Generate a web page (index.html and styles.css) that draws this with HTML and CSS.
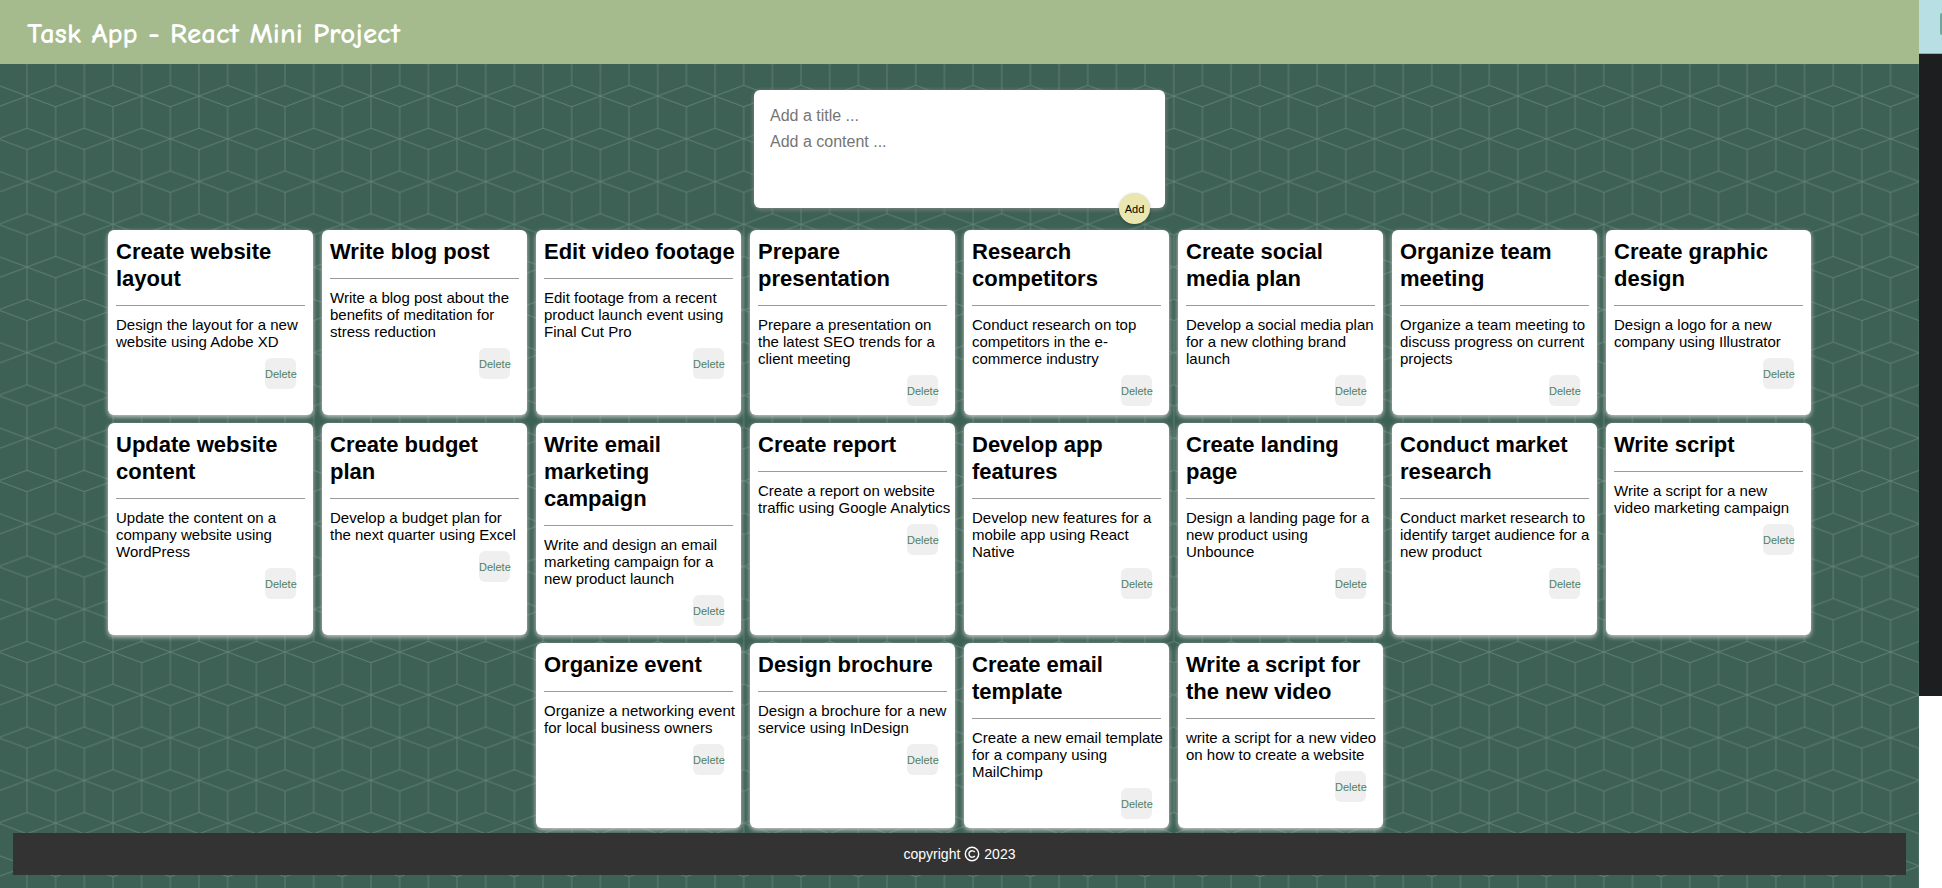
FILE: index.html
```html
<!DOCTYPE html>
<html lang="en">
<head>
<meta charset="utf-8">
<title>Task App</title>
<link rel="stylesheet" href="styles.css">
</head>
<body>
<div class="page">
  <div class="app">
    <svg class="backdrop" aria-hidden="true">
      <defs>
        <pattern id="cubes" x="-1.7" y="53.3" width="57.34" height="85.54" patternUnits="userSpaceOnUse">
          <path d="M0 0L28.67 10.6L57.34 0M0 0V32.1M57.34 0V32.1M0 32.1L28.67 42.77L57.34 32.1M28.67 10.6V42.77M0 53.4L28.67 42.77L57.34 53.4M0 53.4V85.54M57.34 53.4V85.54M28.67 42.77V74.9M0 85.54L28.67 74.9L57.34 85.54"/>
        </pattern>
      </defs>
      <rect width="100%" height="100%" fill="url(#cubes)"/>
    </svg>
    <header class="header"><h1>Task App - React Mini Project</h1></header>
    <main class="main">
      <form class="task-form">
        <input type="text" aria-label="Title" placeholder="Add a title ...">
        <textarea rows="3" aria-label="Content" placeholder="Add a content ..."></textarea>
        <button type="button">Add</button>
      </form>
      <section class="tasks" aria-label="Tasks">
        <article class="task"><h2>Create website layout</h2><hr><p>Design the layout for a new website using Adobe XD</p><button type="button">Delete</button></article>
        <article class="task"><h2>Write blog post</h2><hr><p>Write a blog post about the benefits of meditation for stress reduction</p><button type="button">Delete</button></article>
        <article class="task"><h2>Edit video footage</h2><hr><p>Edit footage from a recent product launch event using Final Cut Pro</p><button type="button">Delete</button></article>
        <article class="task"><h2>Prepare presentation</h2><hr><p>Prepare a presentation on the latest SEO trends for a client meeting</p><button type="button">Delete</button></article>
        <article class="task"><h2>Research competitors</h2><hr><p>Conduct research on top competitors in the e-commerce industry</p><button type="button">Delete</button></article>
        <article class="task"><h2>Create social media plan</h2><hr><p>Develop a social media plan for a new clothing brand launch</p><button type="button">Delete</button></article>
        <article class="task"><h2>Organize team meeting</h2><hr><p>Organize a team meeting to discuss progress on current projects</p><button type="button">Delete</button></article>
        <article class="task"><h2>Create graphic design</h2><hr><p>Design a logo for a new company using Illustrator</p><button type="button">Delete</button></article>
        <article class="task"><h2>Update website content</h2><hr><p>Update the content on a company website using WordPress</p><button type="button">Delete</button></article>
        <article class="task"><h2>Create budget plan</h2><hr><p>Develop a budget plan for the next quarter using Excel</p><button type="button">Delete</button></article>
        <article class="task"><h2>Write email marketing campaign</h2><hr><p>Write and design an email marketing campaign for a new product launch</p><button type="button">Delete</button></article>
        <article class="task"><h2>Create report</h2><hr><p>Create a report on website traffic using Google Analytics</p><button type="button">Delete</button></article>
        <article class="task"><h2>Develop app features</h2><hr><p>Develop new features for a mobile app using React Native</p><button type="button">Delete</button></article>
        <article class="task"><h2>Create landing page</h2><hr><p>Design a landing page for a new product using Unbounce</p><button type="button">Delete</button></article>
        <article class="task"><h2>Conduct market research</h2><hr><p>Conduct market research to identify target audience for a new product</p><button type="button">Delete</button></article>
        <article class="task"><h2>Write script</h2><hr><p>Write a script for a new video&nbsp;marketing campaign</p><button type="button">Delete</button></article>
        <article class="task"><h2>Organize event</h2><hr><p>Organize a networking event for local business owners</p><button type="button">Delete</button></article>
        <article class="task"><h2>Design brochure</h2><hr><p>Design a brochure for a new service using InDesign</p><button type="button">Delete</button></article>
        <article class="task"><h2>Create email template</h2><hr><p>Create a new email template for a company using MailChimp</p><button type="button">Delete</button></article>
        <article class="task"><h2>Write a script for the new video</h2><hr><p>write a script for a new video on how to create a website</p><button type="button">Delete</button></article>
      </section>
    </main>
    <footer class="footer">
      <span>copyright</span>
      <svg viewBox="0 0 16 16" width="16" height="16" role="img" aria-label="Copyright"><circle cx="8" cy="8" r="6.7"/><path d="M10.8 6.2A3.2 3.2 0 1 0 10.8 9.8"/></svg>
      <span>2023</span>
    </footer>
  </div>
  <aside class="side"><div class="side-top"><span class="side-tab"></span></div><div class="side-body"></div></aside>
</div>
</body>
</html>
```

FILE: styles.css
```css
* { box-sizing: border-box; }
body { margin: 0; background: #fff; font-family: "Liberation Sans", Arial, sans-serif; }
.page { display: flex; min-height: 100vh; overflow: hidden; }
.app {
  position: relative;
  isolation: isolate;
  flex: 1;
  display: flex;
  flex-direction: column;
  background: #3d6154;
}
.backdrop { position: absolute; inset: 0; z-index: -1; width: 100%; height: 100%; }
.backdrop path { fill: none; stroke: #5f8074; stroke-width: 1; }
.header {
  display: flex;
  align-items: center;
  height: 64px;
  padding: 4px 27px 0;
  background: #a5bb8e;
}
.header h1 {
  margin: 0;
  color: #fff;
  font: 700 29px/40px "Comic Sans MS", "Comic Neue", "Noto Sans", sans-serif;
}
.main { flex: 1; padding: 26px 80px 5px; }
.task-form {
  position: relative;
  display: flex;
  flex-direction: column;
  gap: 2px;
  width: 411px;
  height: 118px;
  margin: 0 auto 22px;
  padding: 14px;
  border-radius: 6px;
  background: #fff;
  box-shadow: 0 1px 5px #8a8a8a;
}
.task-form input,
.task-form textarea {
  width: 100%;
  padding: 2px;
  border: 0;
  outline: 0;
  background: none;
  font: 16px/20px "Liberation Sans", Arial, sans-serif;
  resize: none;
}
.task-form ::placeholder { color: #757575; }
.task-form button {
  position: absolute;
  right: 15px;
  bottom: -16px;
  width: 31px;
  height: 31px;
  padding: 0;
  border: 0;
  border-radius: 50%;
  background: #eae6b0;
  color: #000;
  font: 11px "Liberation Sans", Arial, sans-serif;
  box-shadow: 0 1px 3px rgba(0, 0, 0, .3);
}
.tasks { display: flex; flex-wrap: wrap; justify-content: center; gap: 8px 9px; }
.task {
  width: 205px;
  padding: 8px 8px 9px;
  border-radius: 6px;
  background: #fff;
  box-shadow: 0 2px 5px #ccc;
}
.task h2 { margin: 0 -5px 13px 0; font-size: 22px; line-height: 27px; }
.task hr { margin: 0 0 10px; border: 0; border-top: 1px solid #9a9a9a; }
.task p { margin: 0 -5px 8px 0; font-size: 15px; line-height: 17px; }
.task button {
  display: block;
  width: 31px;
  height: 31px;
  margin: 0 9px 0 auto;
  padding: 0;
  border: 0;
  border-radius: 6px;
  background: #efefef;
  color: #4f7f62;
  font: 11px "Liberation Sans", Arial, sans-serif;
}
.footer {
  display: flex;
  align-items: center;
  justify-content: center;
  gap: 4px;
  height: 42px;
  margin: 0 13px 13px;
  background: #333;
  color: #fff;
  font-size: 14px;
}
.footer svg { fill: none; stroke: #fff; stroke-width: 1.4; }
.side { width: 23px; }
.side-top {
  display: flex;
  justify-content: flex-end;
  align-items: center;
  height: 54px;
  padding-bottom: 5px;
  border-bottom: 1px solid #8fb0b3;
  background: #b8e0e4;
}
.side-tab { width: 2px; height: 22px; border-radius: 2px 0 0 2px; background: #6fa898; }
.side-body { height: 642px; background: #1d1e20; }
```
